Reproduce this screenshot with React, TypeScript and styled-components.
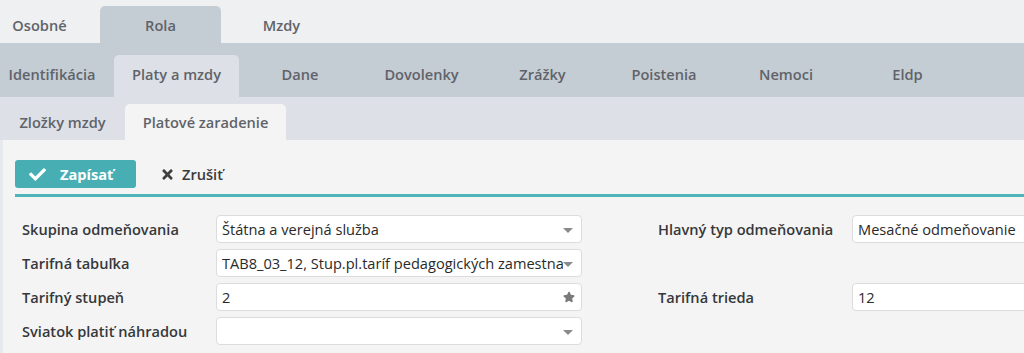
import styled, { createGlobalStyle } from "styled-components";
import { FaCheck, FaTimes, FaStar } from "react-icons/fa";

const Global = createGlobalStyle`
  body {
    margin: 0;
    background: #e6e9ed;
    font-family: "Open Sans", "Liberation Sans", sans-serif;
    overflow: hidden;
  }
`;

const Page = styled.div`
  width: 1024px;
  height: 353px;
  overflow: hidden;
  display: flex;
  flex-direction: column;
`;

const TabBar = styled.div<{ $bg: string; $h: number; $shift?: number }>`
  display: flex;
  align-items: flex-end;
  height: ${(p) => p.$h}px;
  background: ${(p) => p.$bg};
  margin-left: ${(p) => p.$shift || 0}px;
  flex-shrink: 0;
`;

const Tab = styled.div<{ $w: number; $h: number; $active?: string; $pb?: number }>`
  width: ${(p) => p.$w}px;
  height: ${(p) => p.$h}px;
  flex-shrink: 0;
  display: flex;
  align-items: center;
  justify-content: center;
  padding-bottom: ${(p) => p.$pb || 0}px;
  box-sizing: border-box;
  border-radius: 5px 5px 0 0;
  background: ${(p) => p.$active || "transparent"};
  color: #5f6369;
  font-size: 14.6px;
  font-weight: 600;
  white-space: nowrap;
`;

const Content = styled.div`
  flex: 1;
  margin-left: 3px;
  background: #f4f4f4;
  padding: 20px 0 0 12px;
`;

const Toolbar = styled.div`
  display: flex;
  align-items: center;
  gap: 10px;
  height: 28px;
`;

const SaveButton = styled.button`
  display: flex;
  align-items: center;
  gap: 14px;
  width: 121px;
  height: 28px;
  padding: 0 0 0 14px;
  border: none;
  border-radius: 3px;
  background: #47afb4;
  color: #fff;
  font-family: inherit;
  font-size: 14.6px;
  font-weight: 700;
  svg {
    font-size: 17px;
  }
`;

const CancelButton = styled.button`
  display: flex;
  align-items: center;
  gap: 7px;
  height: 28px;
  padding: 0 0 0 14px;
  border: none;
  background: transparent;
  color: #3a3a3a;
  font-family: inherit;
  font-size: 14.6px;
  font-weight: 600;
  svg {
    font-size: 15px;
    color: #3f3f3f;
  }
`;

const Divider = styled.div`
  height: 3px;
  margin-top: 6px;
  background: #4fb4b9;
`;

const Form = styled.div`
  display: grid;
  grid-template-columns: 194px 366px 76px 194px 200px;
  grid-auto-rows: 28px;
  row-gap: 6px;
  margin-top: 18px;
  padding-left: 7px;
`;

const Label = styled.div`
  display: flex;
  align-items: center;
  font-size: 14.6px;
  font-weight: 600;
  color: #35383b;
  white-space: nowrap;
`;

const Field = styled.div`
  position: relative;
  display: flex;
  align-items: center;
  box-sizing: border-box;
  height: 28px;
  padding: 0 18px 0 5px;
  background: #fff;
  border: 1px solid #dcdcdc;
  border-radius: 4px;
  font-size: 14.6px;
  color: #2a2a2a;
  white-space: nowrap;
  overflow: hidden;
`;

const Value = styled.span`
  min-width: 0;
  overflow: hidden;
  text-overflow: clip;
`;

const Caret = styled.span`
  position: absolute;
  right: 8px;
  top: 12px;
  width: 0;
  height: 0;
  border-left: 5px solid transparent;
  border-right: 5px solid transparent;
  border-top: 5px solid #8a8a8a;
`;

const StarMark = styled.span`
  position: absolute;
  right: 6px;
  top: 7px;
  color: #7a7a7a;
  font-size: 12px;
  display: flex;
`;

const Empty = styled.div``;

const topTabs = [
  { t: "Osobné", w: 121 },
  { t: "Rola", w: 121, active: true },
  { t: "Mzdy", w: 121 },
];

const subTabs = [
  { t: "Identifikácia", w: 124 },
  { t: "Platy a mzdy", w: 125, active: true },
  { t: "Dane", w: 122 },
  { t: "Dovolenky", w: 121 },
  { t: "Zrážky", w: 121 },
  { t: "Poistenia", w: 122 },
  { t: "Nemoci", w: 122 },
  { t: "Eldp", w: 121 },
];

export default function App() {
  return (
    <Page>
      <Global />
      <TabBar $bg="#eef0f2" $h={43} $shift={-21}>
        {topTabs.map((x) => (
          <Tab key={x.t} $w={x.w} $h={37} $active={x.active ? "#c4ccd4" : undefined}>
            {x.t}
          </Tab>
        ))}
      </TabBar>
      <TabBar $bg="#c4ccd4" $h={54} $shift={-10}>
        {subTabs.map((x) => (
          <Tab key={x.t} $w={x.w} $h={42} $pb={5} $active={x.active ? "#dde0e6" : undefined}>
            {x.t}
          </Tab>
        ))}
      </TabBar>
      <TabBar $bg="#dde0e6" $h={43}>
        <Tab $w={125} $h={36}>
          Zložky mzdy
        </Tab>
        <Tab $w={161} $h={36} $active="#f4f4f4">
          Platové zaradenie
        </Tab>
      </TabBar>
      <Content>
        <Toolbar>
          <SaveButton>
            <FaCheck />
            Zapísať
          </SaveButton>
          <CancelButton>
            <FaTimes />
            Zrušiť
          </CancelButton>
        </Toolbar>
        <Divider />
        <Form>
          <Label>Skupina odmeňovania</Label>
          <Field>
            <Value>Štátna a verejná služba</Value>
            <Caret />
          </Field>
          <Empty />
          <Label>Hlavný typ odmeňovania</Label>
          <Field>
            <Value>Mesačné odmeňovanie</Value>
          </Field>

          <Label>Tarifná tabuľka</Label>
          <Field>
            <Value>TAB8_03_12, Stup.pl.taríf pedagogických zamestnancov</Value>
            <Caret />
          </Field>
          <Empty />
          <Empty />
          <Empty />

          <Label>Tarifný stupeň</Label>
          <Field>
            <Value>2</Value>
            <StarMark>
              <FaStar />
            </StarMark>
          </Field>
          <Empty />
          <Label>Tarifná trieda</Label>
          <Field>
            <Value>12</Value>
          </Field>

          <Label>Sviatok platiť náhradou</Label>
          <Field>
            <Caret />
          </Field>
        </Form>
      </Content>
    </Page>
  );
}
